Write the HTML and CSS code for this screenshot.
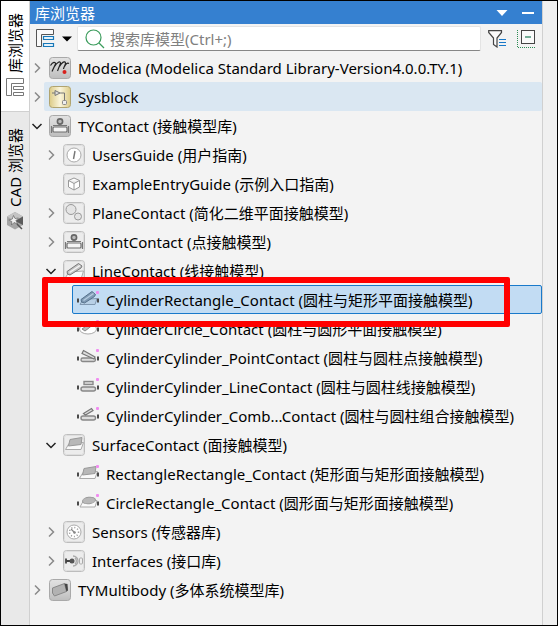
FILE: index.html
```html
<!DOCTYPE html>
<html lang="zh-CN">
<head>
    <meta charset="UTF-8">
    <meta name="viewport" content="width=device-width, initial-scale=1.0">
    <title>库浏览器</title>
    <link rel="stylesheet" href="styles.css">
</head>
<body>
    <!-- 共用图标 -->
    <svg class="defs" aria-hidden="true">
        <defs>
            <linearGradient id="tileGray" x1="0" y1="0" x2="0" y2="1">
                <stop offset="0" stop-color="#e2e2e2"/><stop offset="0.5" stop-color="#d2d2d2"/><stop offset="1" stop-color="#bdbdbd"/>
            </linearGradient>
            <linearGradient id="tileGold" x1="0" y1="0" x2="1" y2="0">
                <stop offset="0" stop-color="#dccb86"/><stop offset="0.5" stop-color="#faf5dc"/><stop offset="1" stop-color="#dccb86"/>
            </linearGradient>
            <symbol id="tile" viewBox="0 0 22 22">
                <rect x="0.5" y="0.5" width="21" height="21" rx="3" fill="url(#tileGray)" stroke="#a9a9a9"/>
            </symbol>
            <symbol id="tileLight" viewBox="0 0 22 22">
                <rect x="0.5" y="0.5" width="21" height="21" rx="3" fill="#ececec" stroke="#bdbdbd"/>
                <rect x="1.5" y="1.5" width="19" height="19" rx="2" fill="none" stroke="#dedede"/>
            </symbol>
            <symbol id="right" viewBox="0 0 14 14"><path d="M5 2.5 L9.5 7 L5 11.5" fill="none" stroke="#8a8a8a" stroke-width="1.5"/></symbol>
            <symbol id="down" viewBox="0 0 14 14"><path d="M2.5 5 L7 9.5 L11.5 5" fill="none" stroke="#222" stroke-width="1.5"/></symbol>
            <symbol id="pins" viewBox="0 0 22 22">
                <path d="M1 9.5v4M21 9.5v4" stroke="#4a4a4a" stroke-width="2"/>
                <rect x="19" y="2" width="3" height="3" rx="1" fill="#f08cf0"/>
            </symbol>
            <symbol id="stamp" viewBox="0 0 22 22">
                <rect x="4" y="12" width="14" height="5" rx="1" fill="#f4f4f4" stroke="#6c6c6c" stroke-width="1.2"/>
                <path d="M2.5 11v7M19.500 11v7M4 10.500h14" stroke="#777" stroke-width="1.2"/>
                <circle cx="11" cy="6.500" r="2.600" fill="#bbb" stroke="#666" stroke-width="1.600"/>
            </symbol>
            <symbol id="cylinder" viewBox="0 0 22 22">
                <path d="M2.500 17.500 L6 12 L20.500 11 L18.500 17.500 Z" fill="#f8f8f8" stroke="#aaa"/>
                <path d="M4 11.500 L15.500 3.500 L19 6 L18 8 L7 15 L4.500 14 Z" fill="#c4c4c4" stroke="#777"/>
                <path d="M6.500 12.500 L17 5.500" stroke="#f4f4f4" stroke-width="1.500"/>
            </symbol>
            <symbol id="surface" viewBox="0 0 22 22">
                <path d="M2.500 15.500 L6 9.500 L20.500 8.500 L18 15.500 Z" fill="#fafafa" stroke="#aaa"/>
                <path d="M7 5.500 L19 3.500 L18 10.500 L5.500 12 Z" fill="#b8b8b8" stroke="#999"/>
            </symbol>
        </defs>
    </svg>

    <div class="window">
        <nav class="side-tabs">
            <button class="side-tab active">
                <span class="side-label">库浏览器</span>
                <svg width="20" height="20" viewBox="0 0 20 20"><path d="M18.5 1.5H1.5V18.5H6.5V6.5H18.5Z" fill="#fff" stroke="#777"/><path d="M8.5 9.5H18.5V12.5H8.5ZM8.5 15.5H18.5V18.5H8.5Z" fill="#fff" stroke="#777"/></svg>
            </button>
            <button class="side-tab">
                <span class="side-label">CAD 浏览器</span>
                <svg width="18" height="20" viewBox="0 0 18 20"><path d="M9 1 L17 5.5 V14 L9 18.5 L1 14 V5.5 Z" fill="#a5a5a5"/><path d="M9 1 L17 5.5 L9 10 L1 5.5Z" fill="#c4c4c4"/><path d="M17 5.5V14L9 10Z" fill="#5c5c5c"/><path d="M7.500 4.500l1.500 3 3.500-.5-2.500 2.500 1.500 3.500-3.500-1.500-2.500 2.500 .3-3.500-3-1.500 3.500-1z" fill="#f0f0f0" stroke="#666" stroke-width="0.7"/><path d="M11 13 L16 18" stroke="#555" stroke-width="1.5"/></svg>
            </button>
        </nav>

        <main class="panel">
            <header class="title-bar">
                <h1>库浏览器</h1>
                <button aria-label="选项"><svg width="12" height="12" viewBox="0 0 12 12"><path d="M0.5 3H11.5L6 9Z" fill="#fff"/></svg></button>
                <button aria-label="最小化"><svg width="12" height="12" viewBox="0 0 12 12"><path d="M0 6H12" stroke="#fff" stroke-width="2"/></svg></button>
            </header>

            <div class="toolbar">
                <button class="view-button" aria-label="视图">
                    <svg width="19" height="19" viewBox="0 0 19 19"><path d="M17.5 0.5H0.5V17.5H5.5V5.5H17.5Z" fill="#fafafa" stroke="#555"/><path d="M7.5 7.5H17.5V10.500H7.5ZM7.5 14.500H17.5V17.5H7.5Z" fill="#e3f1fa" stroke="#1878b8" stroke-width="1.200"/></svg>
                    <svg width="10" height="6" viewBox="0 0 10 6"><path d="M0 0.5H10L5 5.5Z" fill="#000"/></svg>
                </button>
                <label class="search">
                    <svg width="20" height="20" viewBox="0 0 20 20"><circle cx="8.5" cy="8.5" r="7.5" fill="none" stroke="#3b9c5c" stroke-width="1.2"/><path d="M14 14L19 19" stroke="#3b9c5c" stroke-width="1.2"/></svg>
                    <input type="text" placeholder="搜索库模型(Ctrl+;)" aria-label="搜索库模型">
                </label>
                <button aria-label="筛选"><svg width="18" height="18" viewBox="0 0 18 18"><path d="M0.7 0.7H13.5V2.5L9 8V17L5.5 14.5V8L0.7 2.5Z" fill="#fafafa" stroke="#444" stroke-width="1.2"/><path d="M11 9.5H18M11 12.5H18M11 15.5H18" stroke="#1878c8"/></svg></button>
                <button aria-label="全部折叠"><svg width="18" height="18" viewBox="0 0 18 18"><rect x="4.5" y="0.5" width="13" height="13" fill="#fafafa" stroke="#444"/><path d="M8 7H14" stroke="#3b8c6c" stroke-width="1.4"/><path d="M0.5 0V17.5H18" fill="none" stroke="#2c8c54" stroke-dasharray="1 1"/></svg></button>
            </div>

            <ul class="tree">
                <li>
                    <div class="row">
                        <button class="toggle" aria-label="展开"><svg><use href="#right"/></svg></button>
                        <button class="item"><svg class="icon" viewBox="0 0 22 22"><use href="#tile"/><path d="M1.500 8.500C4 4.500 6.500 4.500 6.500 7L3 14.500M5.500 9.500C8 5 11.500 3.500 11.500 6.500L8.500 14M10.500 9.500C13 5 16 3.500 16.500 6C16.500 8 15 9.500 14.500 12M15.500 9.500C17 6.500 18.500 5.500 20 6.500" fill="none" stroke="#222" stroke-width="1.2"/><circle cx="15.500" cy="15" r="2" fill="#d8201c"/></svg>Modelica (Modelica Standard Library-Version4.0.0.TY.1)</button>
                    </div>
                </li>
                <li>
                    <div class="row">
                        <button class="toggle" aria-label="展开"><svg><use href="#right"/></svg></button>
                        <button class="item hover"><svg class="icon" viewBox="0 0 22 22"><rect x="0.5" y="0.5" width="21" height="21" rx="3" fill="url(#tileGold)" stroke="#b0a470"/><path d="M3 7H6M11 7H15.500V14" fill="none" stroke="#777"/><path d="M6 4.500L11 7L6 9.500Z" fill="#ddd" stroke="#777"/><rect x="13.500" y="14.500" width="4" height="4" rx="1" fill="#eee" stroke="#888"/></svg>Sysblock</button>
                    </div>
                </li>
                <li>
                    <div class="row">
                        <button class="toggle" aria-label="折叠"><svg><use href="#down"/></svg></button>
                        <button class="item"><svg class="icon" viewBox="0 0 22 22"><use href="#tile"/><use href="#stamp"/></svg>TYContact (接触模型库)</button>
                    </div>
                    <ul>
                        <li>
                            <div class="row">
                                <button class="toggle" aria-label="展开"><svg><use href="#right"/></svg></button>
                                <button class="item"><svg class="icon" viewBox="0 0 22 22"><use href="#tileLight"/><circle cx="11" cy="11" r="7" fill="#fff" stroke="#aaa"/><path d="M12 7L10.500 15" stroke="#777" stroke-width="1.4"/></svg>UsersGuide (用户指南)</button>
                            </div>
                        </li>
                        <li>
                            <div class="row">
                                <span class="toggle"></span>
                                <button class="item"><svg class="icon" viewBox="0 0 22 22"><use href="#tileLight"/><path d="M11 5L16.500 7.500V14L11 17L5.500 14V7.500ZM5.500 7.500L11 10.500L16.500 7.500M11 10.500V17" fill="#fff" stroke="#999"/></svg>ExampleEntryGuide (示例入口指南)</button>
                            </div>
                        </li>
                        <li>
                            <div class="row">
                                <button class="toggle" aria-label="展开"><svg><use href="#right"/></svg></button>
                                <button class="item"><svg class="icon" viewBox="0 0 22 22"><use href="#tileLight"/><circle cx="8" cy="7.500" r="5" fill="#e4e4e4" stroke="#999"/><circle cx="15" cy="14.500" r="3.500" fill="#e4e4e4" stroke="#999"/></svg>PlaneContact (简化二维平面接触模型)</button>
                            </div>
                        </li>
                        <li>
                            <div class="row">
                                <button class="toggle" aria-label="展开"><svg><use href="#right"/></svg></button>
                                <button class="item"><svg class="icon" viewBox="0 0 22 22"><use href="#tileLight"/><use href="#stamp"/></svg>PointContact (点接触模型)</button>
                            </div>
                        </li>
                        <li>
                            <div class="row">
                                <button class="toggle" aria-label="折叠"><svg><use href="#down"/></svg></button>
                                <button class="item"><svg class="icon" viewBox="0 0 22 22"><use href="#tileLight"/><use href="#cylinder"/></svg>LineContact (线接触模型)</button>
                            </div>
                            <ul>
                                <li>
                                    <div class="row leaf marked">
                                        <button class="item selected"><svg class="icon" viewBox="0 0 22 22"><path d="M3 15.500L6 10.500L20 9.500L18 15.500Z" fill="#b8d0e6" stroke="#8098b0"/><path d="M4 10.500L15 2.500L18.500 5.500L17.500 7.500L7.500 14L4.500 13Z" fill="#7f9ab4" stroke="#56728c"/><path d="M6.500 11.500L16.500 4.500" stroke="#b4cce0" stroke-width="1.5"/><use href="#pins"/></svg>CylinderRectangle_Contact (圆柱与矩形平面接触模型)</button>
                                        <span class="mark"></span>
                                    </div>
                                </li>
                                <li>
                                    <div class="row leaf">
                                        <button class="item"><svg class="icon" viewBox="0 0 22 22"><ellipse cx="11" cy="11" rx="8.5" ry="5" fill="#fff" stroke="#aaa"/><path d="M5 11L15 4L17 6L8 13Z" fill="#bbb" stroke="#888"/><use href="#pins"/></svg>CylinderCircle_Contact (圆柱与圆形平面接触模型)</button>
                                    </div>
                                </li>
                                <li>
                                    <div class="row leaf">
                                        <button class="item"><svg class="icon" viewBox="0 0 22 22"><rect x="4" y="11" width="14.500" height="3.500" rx="1.700" fill="#ddd" stroke="#888" stroke-width="1.300"/><path d="M6.500 3.500L18 10L17 12L5 6.500Z" fill="#ddd" stroke="#777" stroke-width="1.200"/><use href="#pins"/></svg>CylinderCylinder_PointContact (圆柱与圆柱点接触模型)</button>
                                    </div>
                                </li>
                                <li>
                                    <div class="row leaf">
                                        <button class="item"><svg class="icon" viewBox="0 0 22 22"><rect x="4" y="11" width="14.500" height="4" rx="2" fill="#ddd" stroke="#888" stroke-width="1.4"/><rect x="7" y="5.500" width="9" height="3" fill="#ddd" stroke="#888" stroke-width="1.4"/><use href="#pins"/></svg>CylinderCylinder_LineContact (圆柱与圆柱线接触模型)</button>
                                    </div>
                                </li>
                                <li>
                                    <div class="row leaf">
                                        <button class="item"><svg class="icon" viewBox="0 0 22 22"><rect x="4" y="11" width="14.500" height="4" rx="2" fill="#ddd" stroke="#888" stroke-width="1.4"/><path d="M6.500 8.500L14.500 3.500L16 5.500L8.500 10Z" fill="#ddd" stroke="#777" stroke-width="1.200"/><use href="#pins"/></svg>CylinderCylinder_Comb...Contact (圆柱与圆柱组合接触模型)</button>
                                    </div>
                                </li>
                            </ul>
                        </li>
                        <li>
                            <div class="row">
                                <button class="toggle" aria-label="折叠"><svg><use href="#down"/></svg></button>
                                <button class="item"><svg class="icon" viewBox="0 0 22 22"><use href="#tileLight"/><use href="#surface"/></svg>SurfaceContact (面接触模型)</button>
                            </div>
                            <ul>
                                <li>
                                    <div class="row leaf">
                                        <button class="item"><svg class="icon" viewBox="0 0 22 22"><use href="#surface"/><use href="#pins"/></svg>RectangleRectangle_Contact (矩形面与矩形面接触模型)</button>
                                    </div>
                                </li>
                                <li>
                                    <div class="row leaf">
                                        <button class="item"><svg class="icon" viewBox="0 0 22 22"><path d="M3 15L6 9.500L20 8.500L18 15Z" fill="#fafafa" stroke="#aaa"/><ellipse cx="12" cy="8.500" rx="6.500" ry="3.200" fill="#b8b8b8" stroke="#999" transform="rotate(-8 12 8.500)"/><use href="#pins"/></svg>CircleRectangle_Contact (圆形面与矩形面接触模型)</button>
                                    </div>
                                </li>
                            </ul>
                        </li>
                        <li>
                            <div class="row">
                                <button class="toggle" aria-label="展开"><svg><use href="#right"/></svg></button>
                                <button class="item"><svg class="icon" viewBox="0 0 22 22"><use href="#tileLight"/><circle cx="11" cy="11" r="7" fill="#fff" stroke="#aaa"/><circle cx="11" cy="11" r="4.500" fill="none" stroke="#999" stroke-width="1.500" stroke-dasharray="1 2"/><path d="M8 8L12 12" stroke="#888" stroke-width="1.2"/><circle cx="11.500" cy="11.500" r="1.300" fill="#888"/></svg>Sensors (传感器库)</button>
                            </div>
                        </li>
                        <li>
                            <div class="row">
                                <button class="toggle" aria-label="展开"><svg><use href="#right"/></svg></button>
                                <button class="item"><svg class="icon" viewBox="0 0 22 22"><use href="#tileLight"/><path d="M3 8.500V13.500M3 11H8" stroke="#444" stroke-width="1.8"/><circle cx="9" cy="11" r="2.500" fill="#555"/><path d="M10 6A5 5 0 0 1 10 16M12 8A4 4 0 0 1 12 14" fill="none" stroke="#aaa" stroke-width="1.3"/><rect x="16.500" y="8" width="3" height="6" rx="1" fill="#eee" stroke="#aaa"/></svg>Interfaces (接口库)</button>
                            </div>
                        </li>
                    </ul>
                </li>
                <li>
                    <div class="row">
                        <button class="toggle" aria-label="展开"><svg><use href="#right"/></svg></button>
                        <button class="item"><svg class="icon" viewBox="0 0 22 22"><use href="#tile"/><path d="M3.500 9L15.500 4.500L17.500 12.500L5.500 17L3.500 14Z" fill="#b2b2b2" stroke="#888"/><path d="M15.500 4.500L18.500 5L19 11.500L17.500 12.500Z" fill="#444"/></svg>TYMultibody (多体系统模型库)</button>
                    </div>
                </li>
            </ul>
        </main>
    </div>
</body>
</html>
```
FILE: styles.css
```css
* {
    box-sizing: border-box;
}
body {
    margin: 0;
    font-family: "Noto Sans", "Noto Sans CJK SC", sans-serif;
    font-size: 15px;
    color: #000;
}
button {
    border: none;
    padding: 0;
    background: none;
    font: inherit;
    color: inherit;
    cursor: pointer;
}
svg {
    display: block;
    flex-shrink: 0;
}
.defs {
    position: absolute;
    width: 0;
    height: 0;
}
.window {
    display: flex;
    min-height: 100vh;
    padding-right: 14px;
    border: 1px solid #000;
    background-color: #f0f0f0;
}

/* 左侧标签 */
.side-tabs {
    display: flex;
    flex-direction: column;
    width: 29px;
    border-right: 1px solid #d0d0d0;
    background-color: #e9e9e9;
}
.side-tab {
    display: flex;
    flex-direction: column;
    align-items: center;
    gap: 4px;
    padding: 12px 0 14px;
    border-bottom: 1px solid #d0d0d0;
}
.side-tab + .side-tab {
    padding-top: 16px;
    border-bottom: none;
}
.side-tab.active {
    background-color: #fff;
}
.side-label {
    writing-mode: vertical-rl;
    text-orientation: sideways;
    transform: rotate(180deg);
    line-height: 20px;
}

/* 面板 */
.panel {
    flex: 1;
    min-width: 0;
    border-right: 1px solid #d0d0d0;
    background-color: #f3f3f3;
}
.title-bar {
    display: flex;
    align-items: center;
    gap: 14px;
    height: 23px;
    padding: 0 8px 0 5px;
    background-color: #3580d0;
    color: #fff;
}
.title-bar h1 {
    flex: 1;
    margin: 0;
    font-size: 15px;
    font-weight: normal;
    line-height: 22px;
}
.toolbar {
    display: flex;
    align-items: center;
    gap: 11px;
    height: 29px;
    padding: 0 7px 0 6px;
}
.view-button {
    display: flex;
    align-items: center;
    gap: 7px;
    margin-right: -6px;
}
.search {
    flex: 1;
    display: flex;
    align-items: center;
    gap: 5px;
    height: 25px;
    margin-right: -4px;
    padding-left: 7px;
    border: 1px solid #e4e4e4;
    border-bottom-color: #868686;
    border-radius: 2px;
    background-color: #fff;
}
.search input {
    flex: 1;
    min-width: 0;
    padding: 0;
    border: none;
    outline: none;
    background: none;
    font: inherit;
}
.search input::placeholder {
    color: #808080;
}

/* 树 */
.tree,
.tree ul {
    margin: 0;
    padding: 0;
    list-style: none;
}
.tree ul {
    padding-left: 14px;
}
.row {
    display: flex;
    align-items: center;
    height: 29px;
}
.row.leaf {
    padding-left: 14px;
}
.toggle {
    flex: none;
    width: 14px;
    height: 14px;
}
.toggle svg {
    width: 14px;
    height: 14px;
}
.item {
    flex: 1;
    display: flex;
    align-items: center;
    gap: 7px;
    min-width: 0;
    height: 29px;
    padding-left: 4px;
    border: 1px solid transparent;
    border-radius: 2px;
    white-space: nowrap;
}
.item.hover {
    background-color: #dae7f2;
}
.item.selected {
    background-color: #c2dcf3;
    border-color: #1979ca;
}
.icon {
    width: 22px;
    height: 22px;
}
.marked {
    position: relative;
}
.mark {
    position: absolute;
    top: -8px;
    right: 32px;
    bottom: -13px;
    left: -16px;
    z-index: 1;
    border: 6px solid #f00;
    border-radius: 2px;
    pointer-events: none;
}
```
